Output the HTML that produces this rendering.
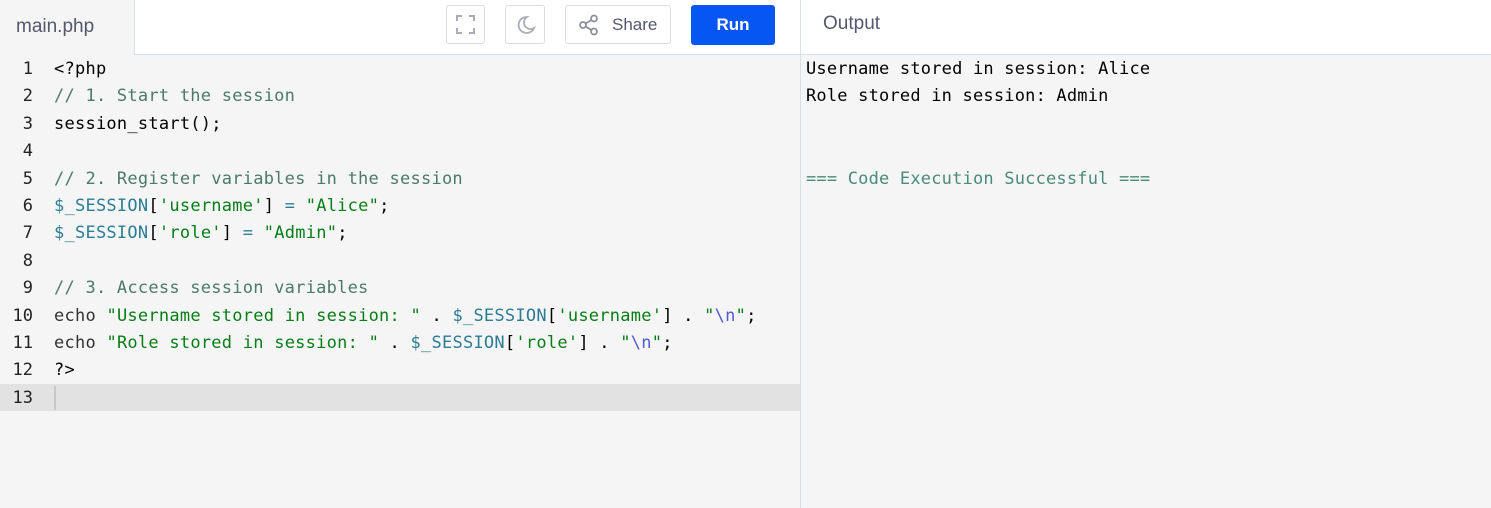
<!DOCTYPE html>
<html><head><style>
body{margin:0;width:1491px;height:508px;background:#f5f5f5;position:relative;overflow:hidden;font-family:"Liberation Sans",sans-serif}
.hdr{position:absolute;left:0;top:0;width:1491px;height:54px;background:#fff;border-bottom:1px solid #d8dfea}
.tab{position:absolute;left:0;top:0;width:135px;height:55px;background:#f5f5f5;border-right:1px solid #d8dfea;color:#55576d;font-size:19px;line-height:53px;padding-left:16px;box-sizing:border-box}
.btn{position:absolute;top:5px;height:38px;border:1px solid #d8dce4;border-radius:3px;box-sizing:border-box;background:#fff}
.run{position:absolute;left:691px;top:5px;width:84px;height:40px;background:#0556f3;border-radius:3px;color:#fff;font-weight:bold;font-size:17px;text-align:center;line-height:39px}
.out{position:absolute;left:823px;top:0;line-height:48px;color:#55576d;font-size:19px}
.vline{position:absolute;left:800px;top:0;width:1px;height:508px;background:#d8dfea}
.code{position:absolute;top:55px;left:0;width:800px;font-family:"DejaVu Sans Mono","Liberation Mono",monospace;font-size:17px;}
.ln{height:27.4px;line-height:27.4px;position:relative;white-space:pre;color:#000}
.ln .n{position:absolute;left:0;width:33px;text-align:right;color:#222;top:1px}
.ln .t{position:absolute;left:54px;letter-spacing:0.25px;top:1px}
.c{color:#4a7a6a}.s{color:#067d17}.v{color:#2c7d94}.e{color:#4f5bd5}.k{color:#333}
.cur{background:#e2e2e2}
.o{position:absolute;left:806px;top:56px;font-family:"DejaVu Sans Mono",monospace;font-size:17px;white-space:pre;line-height:27.4px;letter-spacing:0.2px}
</style></head><body>
<div class="hdr"></div>
<div class="tab">main.php</div>
<div class="btn" style="left:446px;width:39px;height:39px">
<svg width="37" height="37" viewBox="0 0 37 37" fill="none" stroke="#a9adb8" stroke-width="2"><path d="M10 15V10h5M22 10h5v5M27 22v5h-5M15 27h-5v-5"/></svg></div>
<div class="btn" style="left:505px;width:40px;height:39px">
<svg width="38" height="37" viewBox="0 0 38 37" fill="none" stroke="#a9adb8" stroke-width="1.8"><path d="M21 11a8 8 0 1 0 7 11a6.5 6.5 0 0 1-7-11z"/></svg></div>
<div class="btn" style="left:565px;width:106px;height:39px;color:#55576d;font-size:17px;line-height:37px">
<svg style="position:absolute;left:12px;top:8px" width="22" height="22" viewBox="0 0 22 22" fill="none" stroke="#8a8d9c" stroke-width="1.7"><circle cx="5" cy="11" r="3"/><circle cx="16" cy="4.5" r="3"/><circle cx="16" cy="17.5" r="3"/><path d="M7.6 9.5l5.8-3.5M7.6 12.5l5.8 3.5"/></svg>
<span style="position:absolute;left:46px">Share</span></div>
<div class="run">Run</div>
<div class="vline"></div>
<div class="out">Output</div>
<div class="code">
<div class="ln"><span class="n">1</span><span class="t">&lt;?php</span></div>
<div class="ln"><span class="n">2</span><span class="t c">// 1. Start the session</span></div>
<div class="ln"><span class="n">3</span><span class="t">session_start();</span></div>
<div class="ln"><span class="n">4</span></div>
<div class="ln"><span class="n">5</span><span class="t c">// 2. Register variables in the session</span></div>
<div class="ln"><span class="n">6</span><span class="t"><span class="v">$_SESSION</span>[<span class="s">'username'</span>] <span class="v">=</span> <span class="s">"Alice"</span>;</span></div>
<div class="ln"><span class="n">7</span><span class="t"><span class="v">$_SESSION</span>[<span class="s">'role'</span>] <span class="v">=</span> <span class="s">"Admin"</span>;</span></div>
<div class="ln"><span class="n">8</span></div>
<div class="ln"><span class="n">9</span><span class="t c">// 3. Access session variables</span></div>
<div class="ln"><span class="n">10</span><span class="t"><span class="k">echo</span> <span class="s">"Username stored in session: "</span> . <span class="v">$_SESSION</span>[<span class="s">'username'</span>] . <span class="s">"<span class="e">\n</span>"</span>;</span></div>
<div class="ln"><span class="n">11</span><span class="t"><span class="k">echo</span> <span class="s">"Role stored in session: "</span> . <span class="v">$_SESSION</span>[<span class="s">'role'</span>] . <span class="s">"<span class="e">\n</span>"</span>;</span></div>
<div class="ln"><span class="n">12</span><span class="t">?&gt;</span></div>
<div class="ln cur"><span class="n">13</span><span style="position:absolute;left:54px;top:2px;width:2px;height:24px;background:#c8c8c8"></span></div>
</div>
<div class="o">Username stored in session: Alice
Role stored in session: Admin


<span style="color:#4a8a78">=== Code Execution Successful ===</span></div>
</body></html>
